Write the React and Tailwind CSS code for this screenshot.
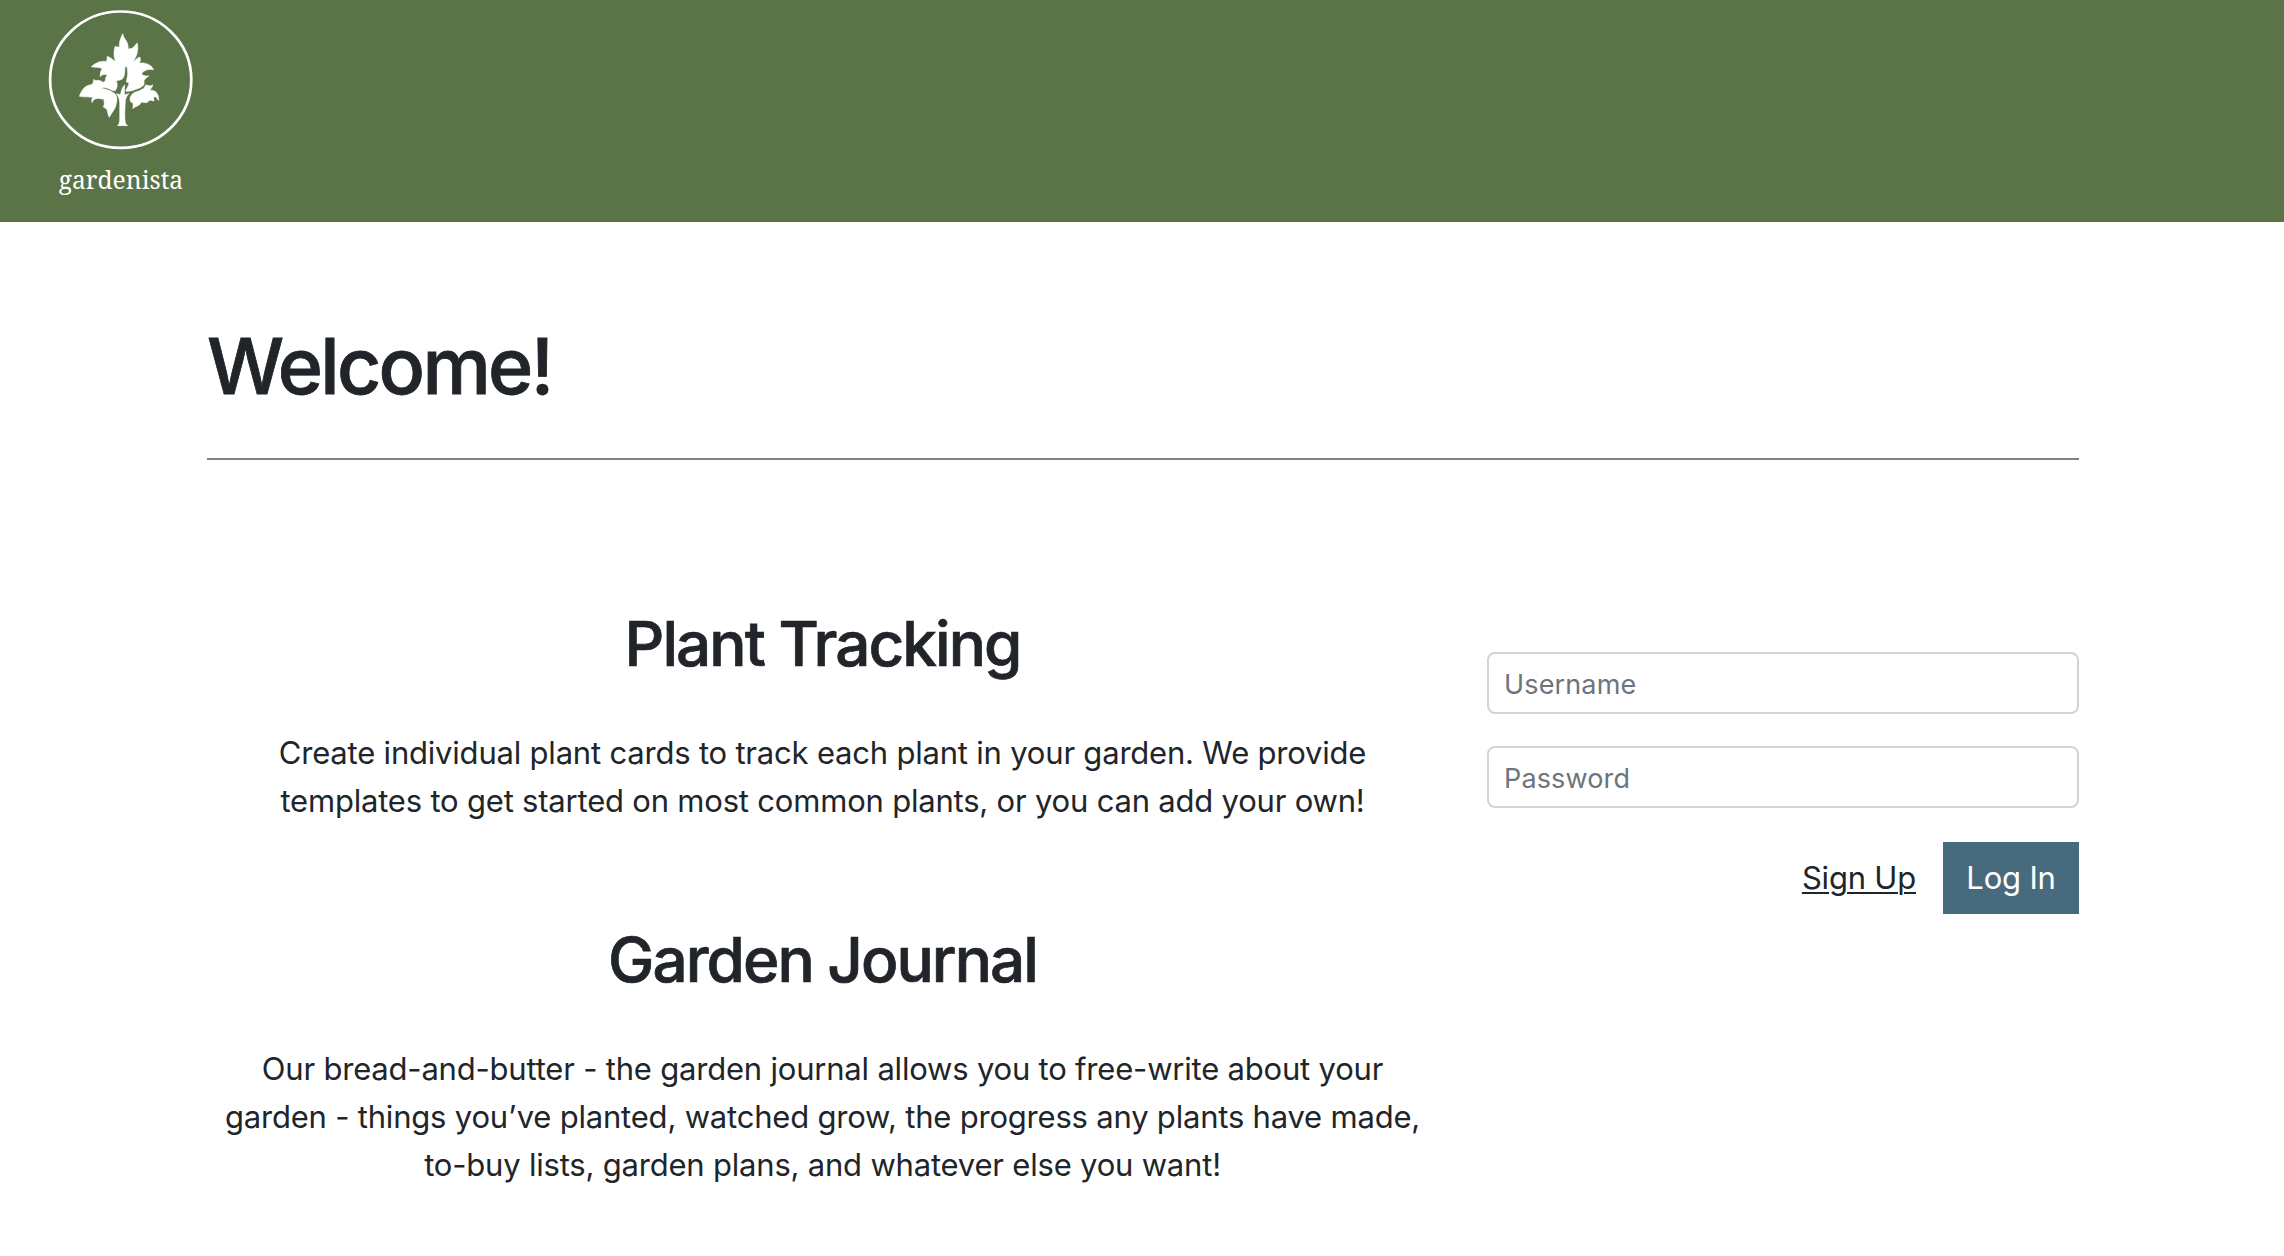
import React from "react";

function Logo() {
  return (
    <svg className="h-[222px] w-[240px]" viewBox="0 0 240 222" fill="none" role="img" aria-label="gardenista">
      <ellipse cx="120.7" cy="79.7" rx="70.6" ry="68.2" stroke="white" strokeWidth="2.7" />
      <g transform="translate(70 20) scale(0.33333)" fill="white" stroke="white" strokeWidth="1.5" strokeLinejoin="round">
        {/* crown */}
        <path d="M158 41C153 53 148 59 148 80C144 82 140 80 135 79C131 94 130 107 136 124C129 121 125 114 112 109C110 114 112 119 109 125C95 121 78 127 64 140C76 144 87 140 97 146C91 152 90 162 91 170C97 163 104 161 112 166C106 171 106 176 108 180C118 178 127 183 137 185C141 180 151 182 158 176C166 168 164 153 165 141L170 139C174 154 174 163 170 179C168 185 169 189 176 187C178 194 172 202 167 212C168 216 177 213 187 212C200 206 212 206 216 199C222 198 224 191 222 182C226 175 231 172 237 167C229 169 222 168 215 163C217 153 233 146 251 149C244 134 228 127 208 129C212 122 213 116 209 111C200 114 197 121 189 125C202 108 206 90 202 69C196 74 193 80 186 85L175 87C175 67 167 61 162 52C160 48 160 44 158 41Z" />
        {/* lower left leaf */}
        <path d="M28 229C34 212 43 196 63 194C72 192 69 183 71 178C77 185 83 179 91 182C96 184 98 188 103 186L108 177L134 180C146 187 142 204 136 212C127 213 123 209 116 206C108 203 101 203 94 205C108 208 124 212 133 220C142 226 142 239 139 251C136 269 125 277 118 292C113 286 114 276 110 267C104 266 104 261 99 260C106 253 101 244 101 237C94 239 86 232 76 237C70 239 68 244 66 248C64 242 65 237 69 232C56 231 43 232 28 229Z" />
        {/* lower right leaf */}
        <path d="M196 216C202 214 209 213 216 208C228 202 223 193 231 195C239 199 244 197 248 194C249 202 241 205 240 211C253 208 268 219 266 242C261 237 260 229 252 230C252 236 249 237 253 243C247 244 243 238 237 242C230 253 222 245 213 247C209 260 198 257 188 266C190 257 190 250 187 248C179 247 178 233 183 227C187 221 192 218 196 216Z" />
        {/* trunk */}
        <path d="M142 317C149 313 149 303 149 292V249C149 236 145 229 139 221C143 221 147 223 151 224C154 212 156 202 164 194C164 204 163 214 164 225C169 223 173 221 177 221C171 227 166 234 166 247C165 270 163 291 166 307C167 313 170 314 173 317Z" />
      </g>
      <text x="58.7" y="188.5" fill="white" fontSize="26" textLength="124.5" lengthAdjust="spacingAndGlyphs" fontFamily="'Noto Serif', 'DejaVu Serif', serif">
        gardenista
      </text>
    </svg>
  );
}

function Feature({ title, children }) {
  return (
    <section className="text-center">
      <h2 className="mb-12 text-[62px] leading-[76px] font-medium tracking-[-1.95px] [-webkit-text-stroke:0.7px_#212529]">{title}</h2>
      <p className="-mt-px px-4 text-[31px] leading-[48px] tracking-[-0.2px]">{children}</p>
    </section>
  );
}

function Field({ type, label }) {
  return (
    <input
      type={type}
      placeholder={label}
      aria-label={label}
      className="mb-8 block h-[62px] w-full rounded-lg border-2 border-[#ced4da] px-[15px] pt-[2px] text-[27px] tracking-[0.15px] placeholder:text-[#6c757d]"
    />
  );
}

export default function App() {
  return (
    <div className="min-h-[1256px] bg-white font-['Inter',sans-serif] text-[#212529]">
      <header className="flex h-[222px] bg-[#5b7447]">
        <Logo />
      </header>
      <main className="ml-[207px] w-[1872px] pt-24">
        <h1 className="text-[77px] leading-[96px] font-medium tracking-[-2.7px] [-webkit-text-stroke:0.8px_#212529]">Welcome!</h1>
        <hr className="mt-11 border-t-2 border-[#808080]" />
        <div className="flex items-start justify-between pt-[146px]">
          <div className="flex w-[1231px] flex-col gap-[97px]">
            <Feature title="Plant Tracking">
              Create individual plant cards to track each plant in your garden. We provide templates to
              get started on most common plants, or you can add your own!
            </Feature>
            <Feature title="Garden Journal">
              Our bread-and-butter - the garden journal allows you to free-write about your garden -
              things you’ve planted, watched grow, the progress any plants have made, to-buy lists,
              garden plans, and whatever else you want!
            </Feature>
          </div>
          <form className="mt-[46px] w-[592px]">
            <Field type="text" label="Username" />
            <Field type="password" label="Password" />
            <div className="mt-[34px] flex items-center justify-end gap-[27px] text-[31px] tracking-[-0.2px]">
              <a href="#signup" className="underline decoration-2 underline-offset-[3px]">Sign Up</a>
              <button type="button" className="h-[72px] w-[136px] bg-[#486a7e] pt-px text-white">Log In</button>
            </div>
          </form>
        </div>
      </main>
    </div>
  );
}
